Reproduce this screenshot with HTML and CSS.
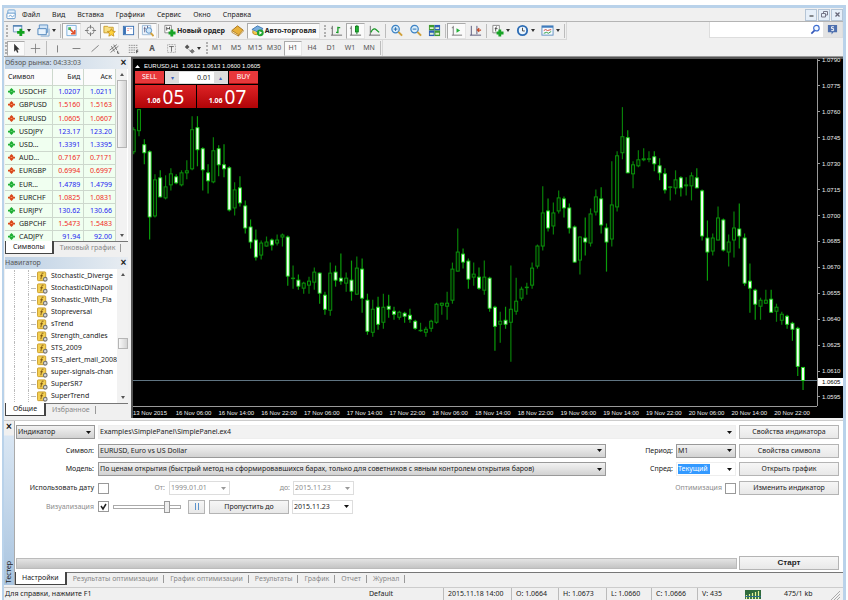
FILE: index.html
```
<!DOCTYPE html>
<html lang="ru">
<head>
<meta charset="utf-8">
<title>EURUSD,H1</title>
<link rel="stylesheet" href="styles.css">
</head>
<body>
<svg class="defs" aria-hidden="true">
  <symbol id="up" viewBox="0 0 8 8"><path d="M4 0l2 2v1h2v2H6v1L4 8 2 6V5H0V3h2V2z" fill="#1fae35"/><path d="M3 4h2" stroke="#6fd67c" stroke-width="1"/></symbol>
  <symbol id="down" viewBox="0 0 8 8"><path d="M4 0l2 2v1h2v2H6v1L4 8 2 6V5H0V3h2V2z" fill="#d9481c"/><path d="M3 4h2" stroke="#ff9c66" stroke-width="1"/></symbol>
  <symbol id="fx" viewBox="0 0 12 12"><rect x=".5" y="1" width="9" height="9.500" rx="1" fill="#f3cf54" stroke="#c79a28"/><path d="M7 2.500c-1-.5-1.600 0-1.800 1.200L4.200 9M3.500 5.200h3" stroke="#7a5410" fill="none"/><circle cx="9" cy="9" r="2" fill="#ddd" stroke="#777" stroke-width="1.200"/></symbol>
</svg>
<div class="app">
  <header>
    <nav class="menu">
      <svg class="logo" viewBox="0 0 12 12"><rect x="2" y="1" width="8" height="6" rx="1" fill="#e4f0fb" stroke="#6fa3d4"/><rect x="1" y="4.500" width="9" height="6" rx="1" fill="#fff" stroke="#5b93c8"/><path d="M3 8l2-1 2 1.500L9 7" stroke="#5b93c8" fill="none"/></svg>
      <a href="#">Файл</a><a href="#">Вид</a><a href="#">Вставка</a><a href="#">Графики</a><a href="#">Сервис</a><a href="#">Окно</a><a href="#">Справка</a>
      <div class="winbtns"><button aria-label="Свернуть"><svg viewBox="0 0 9 9"><path d="M2.500 6h4" stroke="#444" stroke-width="1.200"/></svg></button><button aria-label="Восстановить"><svg viewBox="0 0 9 9"><path d="M3.500 3V1.500h4v3.500H6M1.500 3.500h4v3.500h-4z" fill="none" stroke="#778"/></svg></button><button aria-label="Закрыть"><svg viewBox="0 0 9 9"><path d="M2.500 2.500l4 4M6.500 2.500l-4 4" stroke="#667" stroke-width="1.300"/></svg></button></div>
    </nav>
    <div class="tools">
      <div class="bars">
        <div class="bar">
          <i class="grip"></i>
          <button class="tb dd" aria-label="Новый график"><svg viewBox="0 0 14 14"><path d="M1.500 2h9v6.500h-9z" fill="#eef6ff" stroke="#6b93bd"/><path d="M1 2h10" stroke="#4b7cb0" stroke-width="1.500"/><path d="M9.500 5v8M5.500 9h8" stroke="#12a11e" stroke-width="3"/></svg></button>
          <button class="tb dd" aria-label="Профили"><svg viewBox="0 0 14 14"><path d="M2.500 1h9v8h-9z" fill="#cfe3f6" stroke="#5d8fc2"/><path d="M1 5h9v6.500H1z" fill="#e8f3fd" stroke="#4c83ba"/><path d="M4 13h9V5" stroke="#7ba7d2" fill="none"/></svg></button>
          <i class="sep"></i>
          <button class="tb on" aria-label="Обзор рынка"><svg viewBox="0 0 14 14"><path d="M2 1.500h10v11H2z" fill="#f4f9ff" stroke="#7aaedb"/><path d="M3.500 6.500v-3h3v3z" fill="#3fb257"/><path d="M6 6l4 4M10.500 6.500v4h-4" stroke="#e2502a" stroke-width="1.800" fill="none"/></svg></button>
          <button class="tb" aria-label="Окно данных"><svg viewBox="0 0 14 14"><circle cx="7" cy="7" r="4" fill="none" stroke="#888"/><path d="M7 1v4M7 9v4M1 7h4M9 7h4" stroke="#777"/></svg></button>
          <button class="tb on" aria-label="Навигатор"><svg viewBox="0 0 14 14"><path d="M1 2.500h4l1 1h5v6H1z" fill="#f7df83" stroke="#c99d2c"/><path d="M9 5l1.300 2.700 3 .4-2.200 2 .6 3L9 11.700l-2.700 1.400.6-3-2.200-2 3-.4z" fill="#ffd23b" stroke="#c08a15" stroke-width=".8"/></svg></button>
          <button class="tb" aria-label="Терминал"><svg viewBox="0 0 14 14"><rect x="1.500" y="2.500" width="11" height="9" fill="#fff" stroke="#3b72b5"/><path d="M3 3v8" stroke="#3b72b5" stroke-width="2.500"/><path d="M6 5h1M6 7h1" stroke="#d33"/><path d="M8 5h3" stroke="#aac"/></svg></button>
          <button class="tb on" aria-label="Тестер стратегий"><svg viewBox="0 0 14 14"><path d="M1.500 1.500h9v10h-9z" fill="#eef5fc" stroke="#9bb9d6"/><path d="M4 3v6M3 5h2M7 2v6" stroke="#668"/><circle cx="8.500" cy="7" r="3" fill="#cfe8fb" stroke="#5a8fc4"/><path d="M10.500 9.500l3 3.500" stroke="#d2a23c" stroke-width="2"/></svg></button>
          <i class="sep"></i>
          <button class="tb word order"><svg viewBox="0 0 14 14"><path d="M2 1.500h7v8H2z" fill="#fff" stroke="#888"/><path d="M4 3v4M4 5h3M7 3v3" stroke="#555"/><path d="M9.500 6v7.500M6 9.700h7.500" stroke="#18a326" stroke-width="3"/></svg>Новый ордер</button>
          <button class="tb" aria-label="MetaEditor"><svg viewBox="0 0 14 14"><path d="M1 7l6-5 6 4.500-5 6z" fill="#e8b13b" stroke="#a8731a"/><path d="M1 7v2l7 4v-1.500zM8 13l5-5V6.500" fill="#fff2c4" stroke="#a8731a" stroke-width=".8"/></svg></button>
          <button class="tb word on auto"><svg viewBox="0 0 14 14"><path d="M1 6l6-4 6 3-5 4z" fill="#79aede" stroke="#3f78b3"/><path d="M2 7v3c2 2 5 2 7 0" fill="#f5ca4c" stroke="#b88720"/><circle cx="10" cy="9.500" r="3.700" fill="#23a532"/><path d="M9 7.500v4l3-2z" fill="#fff"/></svg>Авто-торговля</button>
          <i class="grip"></i>
          <button class="tb" aria-label="Бары"><svg viewBox="0 0 14 14"><path d="M2.500 2v10M1 12h12M1 4.500h1.500" stroke="#666" fill="none"/><path d="M8.500 3v7M6.500 9h2M8.500 4h2.500" stroke="#1a9b28" stroke-width="1.400"/></svg></button>
          <button class="tb on" aria-label="Японские свечи"><svg viewBox="0 0 14 14"><path d="M2.500 2v10M1 12h12M1 4.500h1.500" stroke="#666" fill="none"/><path d="M8.500 1v10" stroke="#0b7d18"/><rect x="7" y="2.500" width="3" height="6" fill="#21b634" stroke="#0b7d18"/></svg></button>
          <button class="tb" aria-label="Линия"><svg viewBox="0 0 14 14"><path d="M2.500 2v10M1 12h12" stroke="#666"/><path d="M3 9c3-6 5-4 9 0" fill="none" stroke="#1a9b28" stroke-width="1.300"/></svg></button>
          <i class="sep"></i>
          <button class="tb" aria-label="Увеличить"><svg viewBox="0 0 14 14"><circle cx="6" cy="5.500" r="4" fill="#d8edfb" stroke="#3c82c4" stroke-width="1.300"/><path d="M4 5.500h4M6 3.500v4" stroke="#2468ac"/><path d="M9 8.500l4 4" stroke="#d0a03a" stroke-width="2.200"/></svg></button>
          <button class="tb" aria-label="Уменьшить"><svg viewBox="0 0 14 14"><circle cx="6" cy="5.500" r="4" fill="#d8edfb" stroke="#3c82c4" stroke-width="1.300"/><path d="M4 5.500h4" stroke="#2468ac"/><path d="M9 8.500l4 4" stroke="#d0a03a" stroke-width="2.200"/></svg></button>
          <button class="tb" aria-label="Расположить окна"><svg viewBox="0 0 14 14"><path d="M1 1h6v6H1z" fill="#3e9a2e"/><path d="M7 1h6v6H7z" fill="#2c5fb8"/><path d="M1 7h6v6H1z" fill="#2c5fb8"/><path d="M7 7h6v6H7z" fill="#3e9a2e"/><path d="M2 3.500h4v2H2zM8 3.500h4v2H8zM2 9.500h4v2H2zM8 9.500h4v2H8z" fill="#dff0d0"/></svg></button>
          <i class="sep"></i>
          <button class="tb on" aria-label="Автопрокрутка"><svg viewBox="0 0 14 14"><path d="M3.500 2v10M2 12h11M2 4h1.500" stroke="#777"/><path d="M7 4.500v5l4-2.500z" fill="#25b03a"/></svg></button>
          <button class="tb" aria-label="Сдвиг графика"><svg viewBox="0 0 14 14"><path d="M2.500 2v10M1 12h12M8.500 2v9" stroke="#557"/><path d="M13 6.500H9.500M11 4.500L9 6.500l2 2" stroke="#c34a28" fill="none" stroke-width="1.300"/></svg></button>
          <i class="sep"></i>
          <button class="tb dd" aria-label="Индикаторы"><svg viewBox="0 0 14 14"><path d="M2 1.500h7v8H2z" fill="#fff" stroke="#888"/><path d="M6.500 3C5 3 5 4 5 8M4 5h3" stroke="#444" fill="none"/><path d="M9.500 6v7.500M6 9.700h7.500" stroke="#18a326" stroke-width="3"/></svg></button>
          <button class="tb dd" aria-label="Периоды"><svg viewBox="0 0 14 14"><circle cx="7" cy="7" r="5" fill="#eef7ff" stroke="#2e6db5" stroke-width="2"/><path d="M7 4v3.500h2.500" fill="none" stroke="#444"/></svg></button>
          <button class="tb dd" aria-label="Шаблоны"><svg viewBox="0 0 14 14"><rect x="1" y="2" width="12" height="10" fill="#f4f9ff" stroke="#5f8fc0"/><path d="M1 3h12" stroke="#3f7cbd" stroke-width="2"/><path d="M3 7l2-1 2 1 4-1" stroke="#c43" fill="none"/><path d="M3 10l3-1 2 1 3-2" stroke="#2a9a3a" fill="none"/></svg></button>
          <i class="sep"></i>
        </div>
        <div class="bar second">
          <i class="grip"></i>
          <button class="tb on" aria-label="Курсор"><svg viewBox="0 0 14 14"><path d="M4 1v10l2.300-2 1.500 3.500 1.700-.8L8 8.300h3z" fill="#333"/></svg></button>
          <button class="tb" aria-label="Перекрестие"><svg viewBox="0 0 14 14"><path d="M7 1v12M1 7h12" stroke="#777"/></svg></button>
          <i class="sep"></i>
          <button class="tb" aria-label="Вертикальная линия"><svg viewBox="0 0 14 14"><path d="M7 3v9" stroke="#666"/></svg></button>
          <button class="tb" aria-label="Горизонтальная линия"><svg viewBox="0 0 14 14"><path d="M2 7h10" stroke="#666"/></svg></button>
          <button class="tb" aria-label="Трендовая линия"><svg viewBox="0 0 14 14"><path d="M2 11l9-8" stroke="#666"/></svg></button>
          <button class="tb" aria-label="Канал"><svg viewBox="0 0 14 14"><path d="M1 9l9-7M2 12l10-8M3 4l4 7M6 2l4 7" stroke="#666"/><path d="M11 10v3h2" stroke="#333" fill="none"/></svg></button>
          <button class="tb" aria-label="Фибоначчи"><svg viewBox="0 0 14 14"><path d="M1 3h12M1 6h12M1 9h8M1 12h8" stroke="#777" stroke-dasharray="2 1"/><path d="M11 9v4M11 9h2M11 11h2" stroke="#333"/></svg></button>
          <button class="tb letter">A</button>
          <button class="tb" aria-label="Метка"><svg viewBox="0 0 14 14"><rect x="2" y="2" width="10" height="10" fill="none" stroke="#888" stroke-dasharray="1 1"/><path d="M4 4.500h6M7 4.500V11" stroke="#555"/></svg></button>
          <button class="tb dd" aria-label="Стрелки"><svg viewBox="0 0 14 14"><path d="M4 2l3 3-3 3-3-3z" fill="#555"/><path d="M6 8l3 3M10.500 8l2.500 2.500-2.500 2.500L8 10.500z" fill="#777" stroke="#666"/></svg></button>
          <i class="grip"></i>
          <button class="tb">M1</button><button class="tb">M5</button><button class="tb">M15</button><button class="tb">M30</button><button class="tb on">H1</button><button class="tb">H4</button><button class="tb">D1</button><button class="tb">W1</button><button class="tb">MN</button>
          <i class="sep"></i>
        </div>
      </div>
      <div class="search"><input type="text" aria-label="Поиск"><svg viewBox="0 0 12 12"><circle cx="7" cy="4.500" r="3" fill="#f2f8ff" stroke="#3f6ed0" stroke-width="1.300"/><path d="M5 7l-3.500 3.500" stroke="#3558b8" stroke-width="1.800"/></svg><button aria-label="Сообщения: 5"><svg viewBox="0 0 12 12"><path d="M1 1h10v8H7l-2 2.500V9H1z" fill="#4d6fae"/><path d="M7.500 3H5v2h2.200v2.200H4.700" fill="none" stroke="#fff"/></svg></button></div>
    </div>
  </header>

  <main>
    <aside>
      <section class="panel market">
        <h2>Обзор рынка: 04:33:03 <button aria-label="Закрыть">×</button></h2>
        <div class="body">
          <table><thead><tr><th>Символ</th><th>Бид</th><th>Аск</th></tr></thead><tbody id="quotes"></tbody></table>
          <div class="scroll"><i class="thumb"></i></div>
        </div>
        <div class="tabs"><button class="active">Символы</button><button>Тиковый график</button></div>
      </section>
      <section class="panel navi">
        <h2>Навигатор <button aria-label="Закрыть">×</button></h2>
        <div class="body"><ul id="tree"></ul><div class="scroll"><i class="thumb"></i></div></div>
        <div class="tabs"><button class="active">Общие</button><button>Избранное</button></div>
      </section>
    </aside>
    <section class="chart">
      <svg id="plot" viewBox="133 60 685 346" preserveAspectRatio="none"></svg>
      <div class="prices"><div id="prices"></div><b>1.0605</b></div>
      <div class="times" id="times"></div>
      <div class="trade">
        <p><svg viewBox="0 0 5 4"><path d="M0 4l2.500-3L5 4z" fill="#fff"/></svg>EURUSD,H1 &nbsp;1.0612 1.0613 1.0600 1.0605</p>
        <div class="deal">
          <button class="side">SELL</button>
          <div class="lot"><button aria-label="Меньше">▾</button><input type="text" value="0.01" aria-label="Объём"><button aria-label="Больше">▴</button></div>
          <button class="side">BUY</button>
          <div class="quote"><span>1.06</span><strong>05</strong></div>
          <div class="quote"><span>1.06</span><strong>07</strong></div>
        </div>
      </div>
    </section>
  </main>

  <section class="tester">
    <div class="strip"><button aria-label="Закрыть">×</button><span>Тестер</span></div>
    <div class="pane">
      <form class="settings">
        <div class="row">
          <select aria-label="Тип"><option>Индикатор</option></select>
          <select class="wide flat" aria-label="Файл"><option>Examples\SimplePanel\SimplePanel.ex4</option></select>
          <button type="button">Свойства индикатора</button>
        </div>
        <div class="row">
          <label for="sym">Символ:</label>
          <select id="sym"><option>EURUSD, Euro vs US Dollar</option></select>
          <div class="pair"><label for="per">Период:</label><select id="per"><option>M1</option></select></div>
          <button type="button">Свойства символа</button>
        </div>
        <div class="row">
          <label for="mod">Модель:</label>
          <select id="mod"><option>По ценам открытия (быстрый метод на сформировавшихся барах, только для советников с явным контролем открытия баров)</option></select>
          <div class="pair"><label for="spr">Спред:</label><div class="combo"><input id="spr" type="text" value="Текущий"></div></div>
          <button type="button">Открыть график</button>
        </div>
        <div class="row">
          <label for="use">Использовать дату</label>
          <div class="inline"><input id="use" type="checkbox"><label class="dim from" for="d1">От:</label><select id="d1" class="date dim"><option>1999.01.01</option></select><label class="dim to" for="d2">до:</label><select id="d2" class="date dim"><option>2015.11.23</option></select></div>
          <div class="pair opt"><label class="dim" for="opt">Оптимизация</label><input id="opt" type="checkbox"></div>
          <button type="button">Изменить индикатор</button>
        </div>
        <div class="row">
          <label class="dim" for="vis">Визуализация</label>
          <div class="inline"><input id="vis" type="checkbox" checked><input class="speed" type="range" min="0" max="100" value="82" aria-label="Скорость"><button type="button" class="pause" aria-label="Пауза"><i></i></button><button type="button" class="skip">Пропустить до</button><select class="date" aria-label="Дата"><option>2015.11.23</option></select></div>
        </div>
      </form>
      <div class="run"><div class="progress"></div><button type="button">Старт</button></div>
      <div class="tabs"><button class="active">Настройки</button><button>Результаты оптимизации</button><button>График оптимизации</button><button>Результаты</button><button>График</button><button>Отчет</button><button>Журнал</button></div>
    </div>
  </section>

  <footer>
    <span>Для справки, нажмите F1</span><span>Default</span><span>2015.11.18 14:00</span><span>O: 1.0664</span><span>H: 1.0673</span><span>L: 1.0660</span><span>C: 1.0666</span><span>V: 435</span>
    <svg class="signal" viewBox="0 0 16 9"><rect width="16" height="9" fill="#2f6b3c"/><path d="M1.500 9V5M4.500 9V4M7.500 9V3M10.500 9V2M13.500 9V1" stroke="#e6f29a" stroke-width="1.200"/><path d="M0 6.500h16" stroke="#2b6d8f"/></svg>
    <span class="traffic">475/1 kb</span>
    <svg class="size" viewBox="0 0 9 9"><path d="M0 9l9-9M3 9l6-6M6 9l3-3" stroke="#aaa"/></svg>
  </footer>
</div>
<script src="app.js"></script>
</body>
</html>
```
FILE: styles.css
```
* { box-sizing: border-box; }
body { margin: 0; padding: 5px 2px 0; background: #fff; color: #222; font: 7px/10px "Noto Sans", sans-serif; }
button, input, select { font: inherit; color: inherit; margin: 0; padding: 0; border-radius: 0; }
h2, p, ul { margin: 0; padding: 0; font: inherit; list-style: none; }
.defs { position: absolute; width: 0; height: 0; }
.app { display: flex; flex-direction: column; height: calc(100vh - 5px); min-height: 480px; background: #f0f0f0; border: 2px solid #b9d2ea; border-width: 3px 3px 0 2px; }

.menu { display: flex; align-items: center; gap: 12px; height: 14px; padding-left: 2px; border-bottom: 1px solid #b4b4b4; }
.menu a { color: #222; text-decoration: none; }
.logo { width: 11px; height: 11px; margin-right: -7px; }
.winbtns { display: flex; gap: 1px; margin-left: auto; }
.winbtns button { width: 12px; height: 12px; border: 1px solid #b5c5d6; background: #e6eff9; display: grid; place-items: center; }
.winbtns svg { width: 9px; height: 9px; }
.tools { display: flex; justify-content: space-between; height: 35px; border-bottom: 1px solid #999; }
.bar { display: flex; align-items: center; height: 18px; border-bottom: 1px solid #d8d8d8; border-right: 1px solid #d8d8d8; }
.bars { display: flex; flex-direction: column; align-items: flex-start; }
.second { height: 16px; border-bottom: 0; }
.grip { width: 2px; height: 12px; margin: 0 1px 0 2px; border-left: 2px dotted #b0b0b0; }
.second .grip { margin: 0 0 0 1px; }
.sep { width: 1px; height: 14px; margin: 0 1px; background: #bcbcbc; }
.tb { display: flex; align-items: center; justify-content: center; width: 19px; height: 16px; flex: none; border: 0; background: none; color: #555; white-space: nowrap; }
.second .tb { width: 18px; height: 15px; margin-right: 1px; }
.second .tb.letter { font-size: 8px; font-weight: 700; }
.tb svg { width: 13px; height: 13px; flex: none; }
.second .tb svg { width: 11px; height: 11px; }
.tb.on { background: #fafafa; border: 1px solid #ddd; border-color: #aaa #e4e4e4 #e4e4e4 #aaa; }
.tb.dd, .second .tb.dd { width: 25px; gap: 2px; }
.second .tb.dd { width: 23px; }
.dd::after { content: ""; border: 2px solid transparent; border-top: 3px solid #333; border-bottom: 0; }
.tb.word { width: 68px; gap: 1px; font-weight: 700; color: #222; }
.tb.auto { width: 73px; margin-right: 2px; }
.search { display: flex; align-items: center; width: 134px; height: 16px; background: #fff; border: 1px solid #ddd; border-top: 0; }
.search input { flex: 1; min-width: 0; border: 0; background: none; }
.search svg { width: 11px; height: 11px; margin-right: 2px; }
.search button { width: 19px; height: 15px; border: 0; background: #e3e3e3; display: grid; place-items: center; }
.search button svg { margin: 0; }

main { display: flex; flex: 1; min-height: 0; }
aside { display: flex; flex-direction: column; gap: 1px; width: 124px; padding-left: 1px; margin-right: 3px; }
.panel { display: flex; flex-direction: column; min-height: 0; }
.market { flex: 199; }
.navi { flex: 161; }
.panel h2 { display: flex; justify-content: space-between; align-items: center; height: 12px; flex: none; background: linear-gradient(90deg, #bcd0e4, #e8edf2); color: #555; }
.panel h2 button, .strip button { border: 0; background: none; font: bold 10px/10px "Liberation Sans", sans-serif; color: #222; width: 9px; height: 11px; }
.panel .body { display: flex; flex: 1; min-height: 0; overflow: hidden; background: #fff; }
.scroll { display: flex; flex-direction: column; align-items: center; width: 11px; flex: none; background: #f2f2f2; }
.scroll::before, .scroll::after { content: ""; border: 2px solid transparent; border-bottom: 3px solid #555; border-top: 0; margin: 4px 0; }
.scroll::after { border-top: 3px solid #555; border-bottom: 0; margin-top: auto; }
.thumb { width: 10px; height: 68px; border: 1px solid #b5b5b5; background: linear-gradient(90deg, #f8f8f8, #d4d4d4); }
.navi .thumb { height: 11px; margin-top: 58px; }
table { width: 111px; height: 175px; flex: none; table-layout: fixed; border-collapse: collapse; background: #f0fff0; line-height: 9px; }
th, td { padding: 0 3px 0 0; text-align: right; border: 1px solid #cdd8cd; border-width: 0 1px 1px 0; }
th { height: 16px; font-weight: 400; background: #fbfbfb; }
th:first-child, td:first-child { width: 47px; text-align: left; padding-left: 3px; white-space: nowrap; }
td svg { width: 7px; height: 7px; margin-right: 4px; vertical-align: -1px; }
td.up { color: #2424f0; }
td.down { color: #f02a1c; }
.tabs { display: flex; height: 13px; flex: none; border-top: 1px solid #777; background: #f0f0f0; }
.tabs button { position: relative; border: 0; background: none; color: #888; padding: 0 6px; white-space: nowrap; }
.tabs button:not(.active)::after { content: ""; position: absolute; right: 0; top: 2px; height: 8px; border-right: 1px solid #999; }
.tabs .active { margin-top: -1px; background: #fff; color: #222; border: solid #444; border-width: 0 2px 1px 1px; }
.panel .tabs { margin-bottom: 2px; }
.panel .tabs .active { padding: 0 7px; }
#tree { flex: 1; min-width: 0; overflow: hidden; padding: 1px 0 0 9px; }
#tree li { display: flex; align-items: center; height: 12px; border-left: 1px dotted #bbb; white-space: nowrap; }
#tree li::before { content: ""; width: 8px; height: 12px; margin-left: 13px; flex: none; border-left: 1px dotted #bbb; background: linear-gradient(#bbb, #bbb) 2px 6px / 5px 1px no-repeat; }
#tree svg { width: 11px; height: 11px; margin-right: 3px; flex: none; }

.chart { position: relative; flex: 1; min-width: 0; display: grid; grid-template: minmax(0, 1fr) 12px / minmax(0, 1fr) 26px; background: #000; color: #eee; border: solid #555; border-width: 2px 0 0 2px; font: 6px/8px "Liberation Sans", sans-serif; }
#plot { width: 100%; height: 100%; display: block; }
.prices { position: relative; border-left: 1px solid #999; }
#prices { display: flex; flex-direction: column; justify-content: space-between; height: 100%; padding-bottom: 2px; margin-top: -3px; }
#prices span, .times span { display: flex; align-items: center; white-space: nowrap; }
#prices span::before { content: ""; width: 2px; margin-right: 2px; border-top: 1px solid #999; }
.prices b { position: absolute; left: 0; right: 0; top: 92%; background: #fff; color: #000; font-weight: 400; padding-left: 4px; }
.times { display: grid; grid-template-columns: repeat(16, 1fr); border-top: 1px solid #999; }
.trade { position: absolute; left: 2px; top: 1px; width: 140px; }
.trade p { display: flex; align-items: center; gap: 4px; height: 11px; color: #fff; white-space: nowrap; }
.trade p svg { width: 5px; height: 4px; }
.deal { display: grid; grid-template: 13px 23px / 29px 31px 31px 29px; gap: 1px; width: 123px; background: #000; font-family: "Noto Sans", sans-serif; }
.side { border: 0; border-bottom: 1px solid #a11; background: #e8383b; color: #fff; font-size: 7px; }
.lot { display: flex; grid-column: span 2; background: #fff; border: 1px solid #ddd; }
.lot button { width: 13px; border: 0; background: #ddd; color: #46b; font-size: 6px; line-height: 6px; }
.lot input { flex: 1; min-width: 0; border: 0; color: #222; font-size: 7px; text-align: right; padding-right: 3px; }
.quote { grid-column: span 2; display: flex; align-items: center; justify-content: center; gap: 2px; background: linear-gradient(#dd2326, #b00407); color: #fff; }
.quote span { font-size: 7px; font-weight: 700; padding-top: 8px; }
.quote strong { font: 19px/20px "Noto Sans", sans-serif; }

.tester { display: flex; margin-top: 2px; border-top: 1px solid #ccc; }
.strip { display: flex; flex-direction: column; justify-content: space-between; align-items: center; width: 10px; padding-bottom: 2px; background: linear-gradient(#f0f0f0 14px, #d9e6f3 15px, #a9c4df); }
.strip span { writing-mode: vertical-rl; transform: rotate(180deg); }
.pane { flex: 1; min-width: 0; background: #fff; border-left: 1px solid #aaa; }
.settings { display: grid; grid-template-rows: repeat(5, 1fr); height: 95px; padding-top: 2px; background: #fff; }
.row { display: grid; grid-template-columns: 79px minmax(0, 1fr) 127px 100px; column-gap: 3px; align-items: center; padding: 0 4px 0 1px; }
.row > label { text-align: right; white-space: nowrap; padding-right: 1px; }
.tester .wide { grid-column: span 2; }
.row button, .run button { height: 14px; border: 1px solid #b4b4b4; background: linear-gradient(#f6f6f6, #e8e8e8); white-space: nowrap; }
select { appearance: none; width: 100%; min-width: 0; height: 14px; border: 1px solid #999; padding: 0 10px 0 1px; background: url("data:image/svg+xml,%3Csvg xmlns='http://www.w3.org/2000/svg' width='5' height='3'%3E%3Cpath d='M0 0h5L2.500 3z' fill='%23111'/%3E%3C/svg%3E") right 3px center no-repeat, linear-gradient(#f2f2f2, #d2d2d2); }
select.flat { border-color: #eee; background-color: #f2f2f2; background-image: url("data:image/svg+xml,%3Csvg xmlns='http://www.w3.org/2000/svg' width='5' height='3'%3E%3Cpath d='M0 0h5L2.500 3z' fill='%23111'/%3E%3C/svg%3E"); }
select.date { width: 61px; border-color: #ddd; background-color: #fff; background-image: url("data:image/svg+xml,%3Csvg xmlns='http://www.w3.org/2000/svg' width='5' height='3'%3E%3Cpath d='M0 0h5L2.500 3z' fill='%23111'/%3E%3C/svg%3E"); }
select.dim { background-image: url("data:image/svg+xml,%3Csvg xmlns='http://www.w3.org/2000/svg' width='5' height='3'%3E%3Cpath d='M0 0h5L2.500 3z' fill='%23999'/%3E%3C/svg%3E"); }
.dim { color: #8c8c8c; }
.pair { display: flex; align-items: center; justify-content: flex-end; gap: 3px; white-space: nowrap; }
.pair select, .combo { width: 60px; }
.combo { height: 14px; padding: 1px; border: 1px solid #eee; background: url("data:image/svg+xml,%3Csvg xmlns='http://www.w3.org/2000/svg' width='5' height='3'%3E%3Cpath d='M0 0h5L2.500 3z' fill='%23111'/%3E%3C/svg%3E") right 3px center no-repeat; }
.combo input { display: block; width: 32px; height: 10px; border: 0; background: #3399ff; color: #fff; }
.inline { display: flex; align-items: center; }
input[type="checkbox"] { appearance: none; width: 11px; height: 11px; flex: none; border: 1px solid #999; background: #fff; }
input[type="checkbox"]:checked { background: url("data:image/svg+xml,%3Csvg xmlns='http://www.w3.org/2000/svg' width='9' height='9'%3E%3Cpath d='M2 4l2 3 3-5' fill='none' stroke='%23222' stroke-width='1.500'/%3E%3C/svg%3E") center no-repeat; }
.from { width: 60px; text-align: right; padding-right: 4px; }
.to { width: 63px; text-align: right; padding-right: 3px; }
.speed { appearance: none; width: 68px; height: 12px; margin: 0 7px 0 4px; background: linear-gradient(#fff, #fff) center / 66px 2px no-repeat, linear-gradient(#aaa, #aaa) center / 68px 4px no-repeat; }
.speed::-webkit-slider-thumb { appearance: none; width: 6px; height: 12px; border: 1px solid #999; background: #eee; }
.row .pause { display: grid; place-items: center; width: 17px; margin-right: 4px; }
.pause i { width: 4px; height: 7px; border: solid #5a92cc; border-width: 0 1px; }
.row .skip { width: 80px; margin-right: 3px; }
.run { display: grid; grid-template-columns: minmax(0, 1fr) 100px; gap: 2px; align-items: center; margin-top: 40px; padding: 0 4px 2px 1px; }
.run button { font: 700 8px/10px "Liberation Sans", sans-serif; }
.progress { height: 11px; border: 1px solid #bbb; background: linear-gradient(#e4e4e4, #c4c4c4); }

footer { display: grid; grid-template-columns: minmax(0, 1fr) 78px 68px 47px 48px 45px 46px 44px 28px 62px 12px; align-items: center; height: 13px; margin-top: 2px; border-top: 1px solid #ccc; }
footer span { padding-left: 4px; white-space: nowrap; line-height: 12px; }
footer span:first-child { padding-left: 1px; }
footer span:nth-child(n+3):nth-child(-n+8) { border-left: 1px solid #bbb; }
.signal { width: 16px; height: 9px; margin-left: 4px; }
footer .traffic { padding-left: 15px; }
.size { width: 9px; height: 9px; align-self: end; }
```
FILE: app.js
```
const quotes = [
  ['USDCHF', '1.0207', '1.0211', 'up'], ['GBPUSD', '1.5160', '1.5163', 'down'], ['EURUSD', '1.0605', '1.0607', 'down'],
  ['USDJPY', '123.17', '123.20', 'up'], ['USD...', '1.3391', '1.3395', 'up'], ['AUD...', '0.7167', '0.7171', 'down'],
  ['EURGBP', '0.6994', '0.6997', 'down'], ['EUR...', '1.4789', '1.4799', 'up'], ['EURCHF', '1.0825', '1.0831', 'down'],
  ['EURJPY', '130.62', '130.66', 'up'], ['GBPCHF', '1.5473', '1.5483', 'down'], ['CADJPY', '91.94', '92.00', 'up'],
];
document.getElementById('quotes').innerHTML = quotes.map(([s, b, a, d]) =>
  `<tr><td><svg><use href="#${d}"/></svg>${s}</td><td class="${d}">${b}</td><td class="${d}">${a}</td></tr>`).join('');

const indicators = ['Stochastic_Diverge', 'StochasticDiNapoli', 'Stohastic_With_Fla', 'Stopreversal', 'sTrend',
  'Strength_candles', 'STS_2009', 'STS_alert_mail_2008', 'super-signals-chan', 'SuperSR7', 'SuperTrend'];
document.getElementById('tree').innerHTML = indicators.map(n => `<li><svg><use href="#fx"/></svg>${n}</li>`).join('');

const prices = [];
for (let p = 10790; p >= 10595; p -= 15) prices.push((p / 10000).toFixed(4));
document.getElementById('prices').innerHTML = prices.map(p => `<span>${p}</span>`).join('');

const times = ['13 Nov 2015', '16 Nov 06:00', '16 Nov 14:00', '16 Nov 22:00', '17 Nov 06:00', '17 Nov 14:00', '17 Nov 22:00',
  '18 Nov 06:00', '18 Nov 14:00', '18 Nov 22:00', '19 Nov 06:00', '19 Nov 14:00', '19 Nov 22:00', '20 Nov 06:00', '20 Nov 14:00', '20 Nov 22:00'];
document.getElementById('times').innerHTML = times.map(t => `<span>${t}</span>`).join('');

// Each candle: high, body top, body bottom, low; a trailing "w" marks a falling (filled) one.
const candles = `128,130,153,155 110,110,132,137 140,145,154,165w 151,152,218,240w 175,180,217,218 171,178,198,198w 176,187,199,200
169,174,186,191 175,177,184,185w 171,173,186,187 161,171,174,180 117,130,170,171 117,128,151,167w 148,149,171,191w 165,173,182,194w
138,151,183,184 146,149,166,177w 145,165,170,178w 167,168,211,212w 183,190,209,216 177,188,204,207w 201,206,229,234w 220,227,243,249w
230,240,258,261w 241,243,256,260 237,242,247,247 239,240,246,251w 235,240,244,246 234,235,238,247 236,237,277,286w 266,278,279,289
275,280,287,290w 282,283,289,294 277,281,286,294 268,272,283,290 273,273,294,304w 292,295,310,315w 263,273,311,316 266,272,281,287w
254,278,282,285w 273,278,284,292 261,280,292,301w 257,268,295,295 259,269,299,313w 294,300,332,335w 300,309,333,337 297,307,325,330w
294,307,323,329 295,306,310,318w 307,311,315,320w 311,312,318,320 312,313,317,323w 309,315,320,323w 320,321,329,330w 323,330,331,332
327,329,333,337 320,321,329,332 303,304,323,324 303,303,306,315 292,303,307,320 263,269,301,304 229,252,272,272 249,254,263,269w
259,261,280,289w 263,274,278,286 268,277,289,290w 261,277,291,295 277,278,309,312w 306,307,327,351w 312,321,325,343 307,320,325,329w
266,309,323,362 278,301,312,315 287,289,299,301 283,287,288,295 263,268,286,289 245,246,267,269 187,213,247,251 199,211,229,232w
203,213,227,235 191,198,212,214 197,199,209,218w 204,208,229,234w 226,227,263,263w 237,237,261,275 218,238,243,256w 209,214,244,247
190,197,213,216 188,199,226,234w 224,228,243,272w 162,205,240,247 152,156,208,212 108,137,154,160 131,138,174,174w 162,165,175,189
151,160,167,168 149,159,161,162 152,159,160,163 152,157,165,172w 159,166,174,181w 169,174,191,194w 187,187,188,201 171,180,189,195
177,178,189,197w 178,185,187,196 173,176,187,201 169,178,189,189w 190,191,237,241w 221,238,253,281w 234,238,252,256 207,218,241,241
219,220,251,252w 235,242,253,267 212,228,241,258 204,229,237,249w 234,238,284,286w 264,281,289,313w 289,290,305,320w 298,300,307,320
290,300,304,304 290,299,313,313w 304,307,312,322 312,314,321,325 315,316,325,329w 322,323,330,341w 327,328,367,376w 367,367,381,390w`.split(/\s+/);
const first = 133.7, step = 5.32;
let svg = '<path d="M133 380.5h685" stroke="#5f7482"/>';
candles.forEach((c, i) => {
  const falling = c.endsWith('w');
  const [high, top, bottom, low] = c.replace('w', '').split(',').map(Number);
  const x = first + i * step;
  svg += `<path d="M${x} ${high}V${low}" stroke="${falling ? '#0a9c0a' : '#088008'}" stroke-width="1.2"/>`;
  svg += `<rect x="${x - 1.5}" y="${top + .5}" width="3" height="${Math.max(bottom - top - 1, .5)}" fill="${falling ? '#f4fff4' : '#001a00'}" stroke="${falling ? '#14d414' : '#0a920a'}" stroke-width="${falling ? .9 : 1}"/>`;
});
document.getElementById('plot').innerHTML = svg;
```
